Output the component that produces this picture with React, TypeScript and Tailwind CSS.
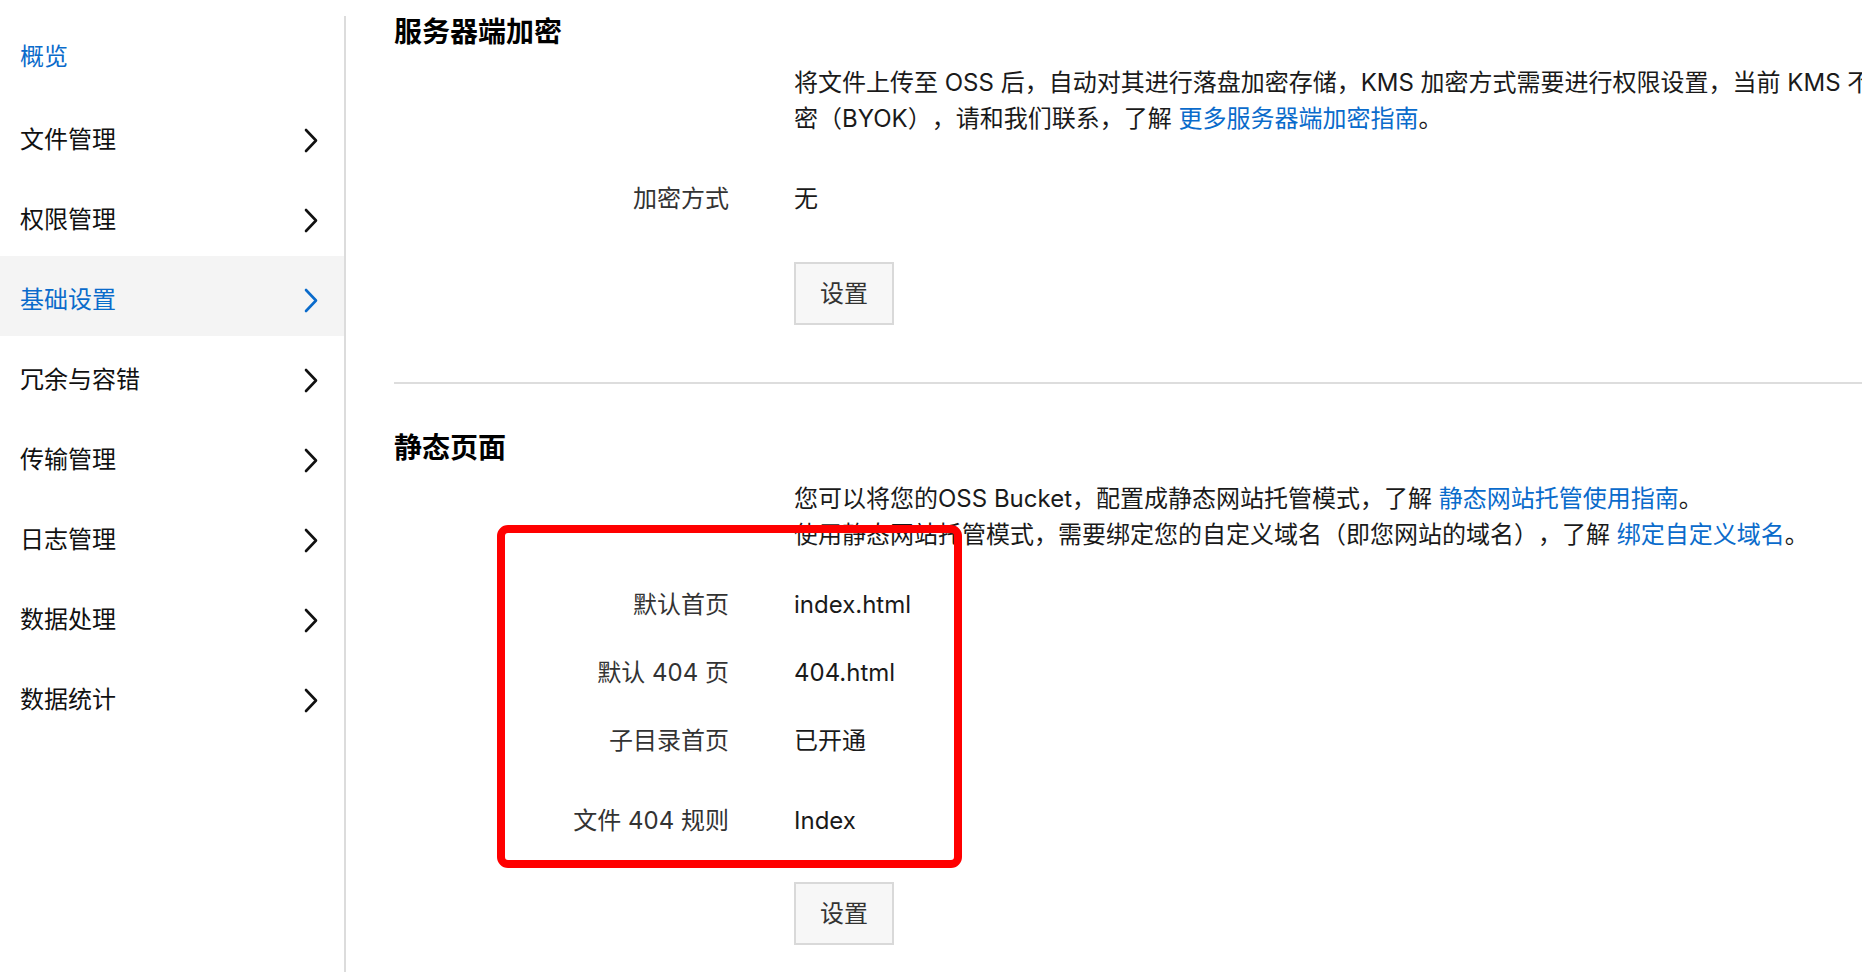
import React from "react";

const BLUE = "text-[#0a6bcb]";

function Chevron({ active }: { active?: boolean }) {
  return (
    <svg width="16" height="25" viewBox="0 0 16 25" className={active ? BLUE : "text-[#111]"}>
      <polyline points="3,2 13,12.5 3,23" fill="none" stroke="currentColor" strokeWidth="2.6" strokeLinecap="round" strokeLinejoin="round" />
    </svg>
  );
}

const items = ["文件管理", "权限管理", "基础设置", "冗余与容错", "传输管理", "日志管理", "数据处理", "数据统计"];

function Row({ label, value, mt }: { label: string; value: string; mt: string }) {
  return (
    <div className={`flex leading-[36px] ${mt}`}>
      <div className="w-[335px] shrink-0 text-right text-[#333]">{label}</div>
      <div className="ml-[65px] text-[#1a1a1a]">{value}</div>
    </div>
  );
}

function Btn({ mt }: { mt: string }) {
  return (
    <div className={`ml-[400px] ${mt}`}>
      <button className="flex h-[63px] w-[100px] items-center justify-center border-2 border-[#d9d9d9] bg-[#f7f7f7] text-[24px] text-[#333]">
        设置
      </button>
    </div>
  );
}

export default function App() {
  return (
    <div className="relative flex h-[972px] w-[1862px] overflow-hidden bg-white font-['Inter','Noto_Sans_CJK_SC',sans-serif] text-[24px] [text-spacing-trim:space-all]">
      <aside className="w-[346px] shrink-0 pt-[16px]">
        <div className="h-full border-r-2 border-[#dcdcdc]">
          <div className={`flex h-[80px] items-center pl-[20px] pt-[2px] ${BLUE}`}>概览</div>
          {items.map((t) => {
            const active = t === "基础设置";
            return (
              <div
                key={t}
                className={`flex h-[80px] items-center justify-between pl-[20px] pr-[25px] pt-[8px] ${
                  active ? `bg-[#f4f4f4] ${BLUE}` : "text-[#111]"
                }`}
              >
                <span>{t}</span>
                <Chevron active={active} />
              </div>
            );
          })}
        </div>
      </aside>

      <main className="min-w-0 flex-1 pl-[48px] pt-[14px]">
        <h2 className="text-[28px] font-bold leading-[36px] text-black">服务器端加密</h2>
        <div className="ml-[400px] mt-[15px] whitespace-nowrap leading-[36px] text-[#1a1a1a]">
          <div>将文件上传至 OSS 后，自动对其进行落盘加密存储，KMS 加密方式需要进行权限设置，当前 KMS 不支持用户自带密钥加</div>
          <div>
            密（BYOK），请和我们联系，了解 <span className={BLUE}>更多服务器端加密指南</span>。
          </div>
        </div>
        <Row label="加密方式" value="无" mt="mt-[44px]" />
        <Btn mt="mt-[45px]" />
        <div className="mt-[57px] h-[2px] bg-[#dddddd]" />

        <h2 className="mt-[46px] text-[28px] font-bold leading-[36px] text-black">静态页面</h2>
        <div className="ml-[400px] mt-[15px] whitespace-nowrap leading-[36px] text-[#1a1a1a]">
          <div>
            您可以将您的OSS Bucket，配置成静态网站托管模式，了解 <span className={BLUE}>静态网站托管使用指南</span>。
          </div>
          <div>
            使用静态网站托管模式，需要绑定您的自定义域名（即您网站的域名），了解 <span className={BLUE}>绑定自定义域名</span>。
          </div>
        </div>
        <Row label="默认首页" value="index.html" mt="mt-[34px]" />
        <Row label="默认 404 页" value="404.html" mt="mt-[32px]" />
        <Row label="子目录首页" value="已开通" mt="mt-[32px]" />
        <Row label="文件 404 规则" value="Index" mt="mt-[44px]" />
        <Btn mt="mt-[43px]" />
      </main>

      <div className="pointer-events-none absolute left-[497px] top-[525px] h-[343px] w-[465px] rounded-[11px] border-[8px] border-[#ff0000]" />
    </div>
  );
}
